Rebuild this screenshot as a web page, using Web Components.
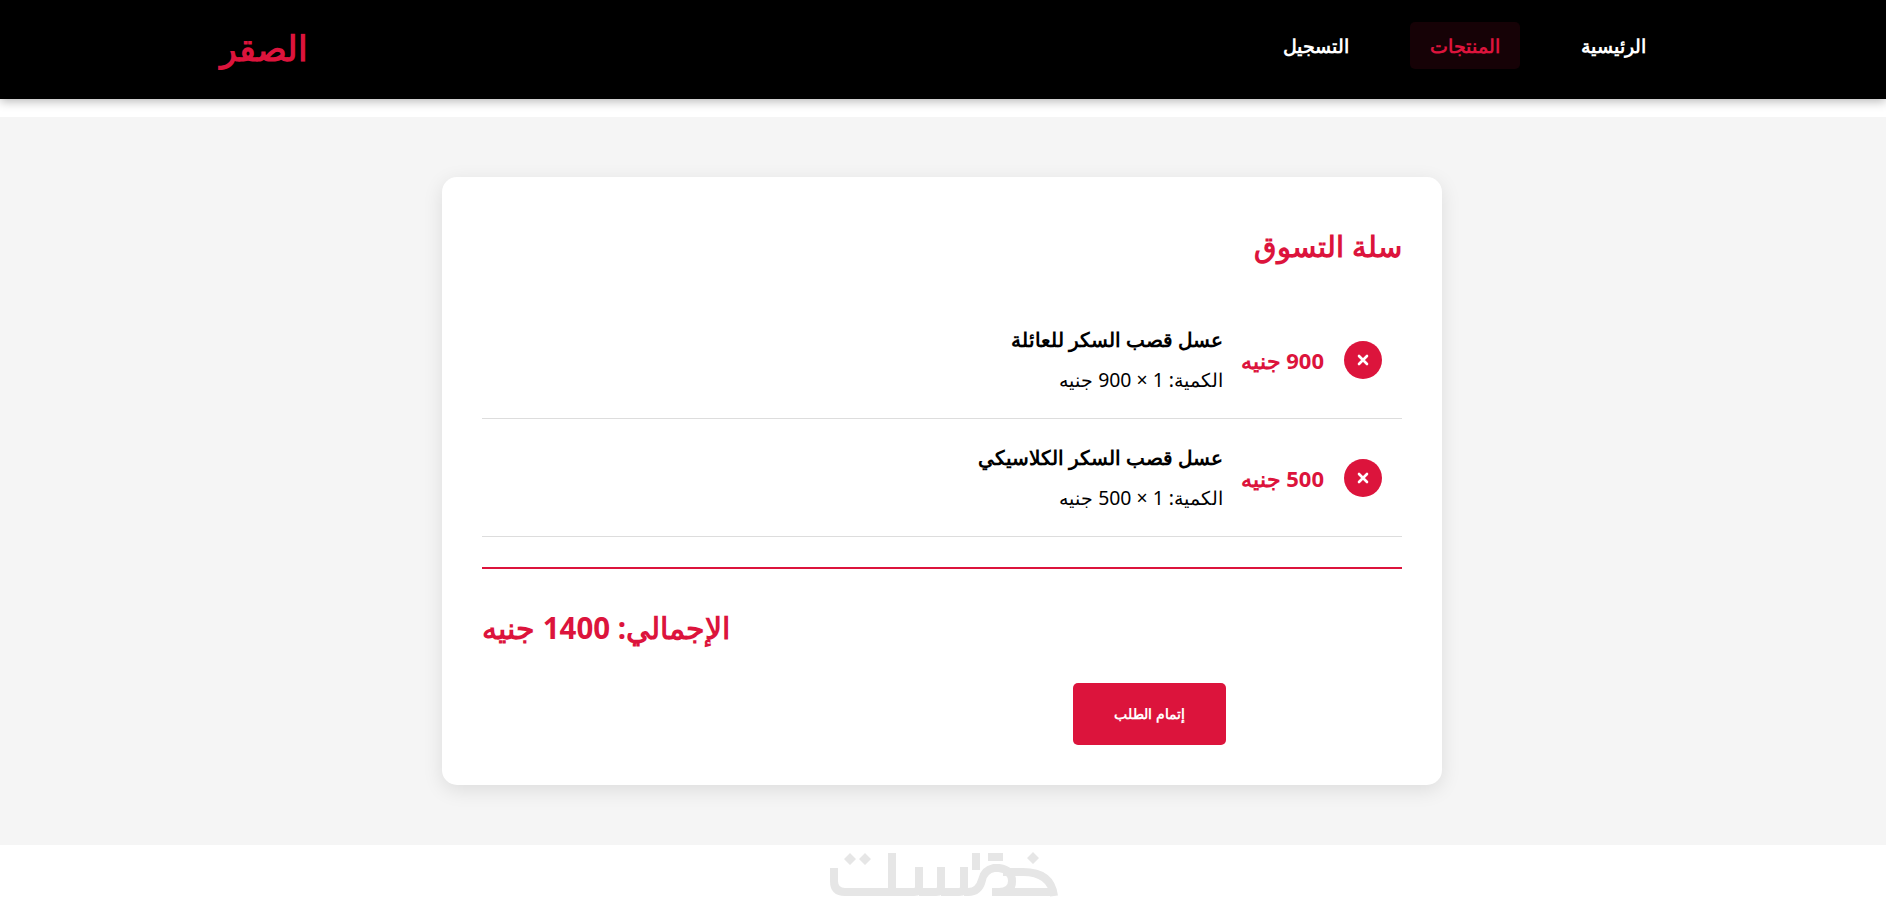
<!DOCTYPE html>
<html lang="ar" dir="rtl">
<head>
<meta charset="utf-8">
<title>سلة التسوق</title>
<style>
  html, body { margin: 0; background: #fff; }
  body { font-family: "Noto Sans", "Open Sans", sans-serif; color: #000; }
</style>
</head>
<body>
<site-header brand="الصقر">
  <nav-link>الرئيسية</nav-link>
  <nav-link active>المنتجات</nav-link>
  <nav-link>التسجيل</nav-link>
</site-header>
<cart-page>
  <cart-card heading="سلة التسوق" total="الإجمالي: 1400 جنيه" action="إتمام الطلب">
    <cart-item name="عسل قصب السكر للعائلة" qty="الكمية: 1 × 900 جنيه" price="900 جنيه"></cart-item>
    <cart-item name="عسل قصب السكر الكلاسيكي" qty="الكمية: 1 × 500 جنيه" price="500 جنيه"></cart-item>
  </cart-card>
</cart-page>
<site-footer></site-footer>

<script>
class SiteHeader extends HTMLElement {
  connectedCallback() {
    this.attachShadow({ mode: 'open' });
    this.shadowRoot.innerHTML = `
      <style>
        :host {
          display: flex;
          justify-content: space-between;
          align-items: center;
          box-sizing: border-box;
          height: 99px;
          padding: 0 220px 8px;
          margin-bottom: 18px;
          background: #000;
          box-shadow: 0 2px 10px rgba(0,0,0,.3);
        }
        nav { display: flex; gap: 41px; }
        .brand {
          color: #dc143c;
          font-size: 35px;
          font-weight: 700;
          line-height: 44px;
          margin-top: 5px;
        }
      </style>
      <nav><slot></slot></nav>
      <div class="brand">${this.getAttribute('brand')}</div>
    `;
  }
}
customElements.define('site-header', SiteHeader);

class NavLink extends HTMLElement {
  connectedCallback() {
    this.attachShadow({ mode: 'open' });
    this.shadowRoot.innerHTML = `
      <style>
        :host {
          display: block;
          padding: 12px 20px 10px;
          height: 25px;
          line-height: 25px;
          font-size: 19px;
          font-weight: 600;
          color: #fff;
          border-radius: 5px;
        }
        :host([active]) {
          color: #dc143c;
          background: rgba(220,20,60,.1);
        }
      </style>
      <slot></slot>
    `;
  }
}
customElements.define('nav-link', NavLink);

class CartPage extends HTMLElement {
  connectedCallback() {
    this.attachShadow({ mode: 'open' });
    this.shadowRoot.innerHTML = `
      <style>
        :host {
          display: flex;
          justify-content: center;
          padding: 60px 2px 60px 0;
          background: #f5f5f5;
        }
      </style>
      <slot></slot>
    `;
  }
}
customElements.define('cart-page', CartPage);

class CartCard extends HTMLElement {
  connectedCallback() {
    this.attachShadow({ mode: 'open' });
    this.shadowRoot.innerHTML = `
      <style>
        :host {
          display: block;
          box-sizing: border-box;
          width: 1000px;
          height: 608px;
          padding: 40px;
          background: #fff;
          border-radius: 15px;
          box-shadow: 0 5px 20px rgba(0,0,0,.1);
        }
        h2 {
          margin: 0 0 24px;
          height: 60px;
          color: #dc143c;
          font-size: 29.4px;
          font-weight: 600;
          line-height: 58px;
        }
        .total {
          margin-top: 30px;
          padding-top: 39px;
          border-top: 2px solid #dc143c;
          color: #dc143c;
          font-size: 29.5px;
          font-weight: 700;
          line-height: 40px;
          text-align: left;
        }
        button {
          display: block;
          width: 153px;
          height: 62px;
          margin: 35px 176px 0 0;
          padding: 0;
          border: 0;
          border-radius: 5px;
          background: #dc143c;
          color: #fff;
          font: 700 14px "Liberation Sans", Arial, sans-serif;
        }
      </style>
      <h2>${this.getAttribute('heading')}</h2>
      <slot></slot>
      <div class="total">${this.getAttribute('total')}</div>
      <button>${this.getAttribute('action')}</button>
    `;
  }
}
customElements.define('cart-card', CartCard);

class CartItem extends HTMLElement {
  connectedCallback() {
    this.attachShadow({ mode: 'open' });
    this.shadowRoot.innerHTML = `
      <style>
        :host {
          display: flex;
          align-items: center;
          gap: 20px;
          box-sizing: border-box;
          height: 118px;
          padding: 0 20px;
          border-bottom: 1px solid #ddd;
        }
        .remove {
          flex: none;
          display: flex;
          align-items: center;
          justify-content: center;
          width: 38px;
          height: 38px;
          border-radius: 50%;
          background: #dc143c;
        }
        .price {
          flex: none;
          width: 81px;
          color: #dc143c;
          font-size: 22px;
          font-weight: 700;
          white-space: nowrap;
        }
        .name { font-size: 19.8px; font-weight: 700; line-height: 24px; }
        .qty { font-size: 19.4px; line-height: 24px; margin-top: 16px; }
      </style>
      <div class="remove">
        <svg width="12" height="12" viewBox="0 0 12 12"><path d="M2 2l8 8M10 2l-8 8" stroke="#fff" stroke-width="2.6" stroke-linecap="round"/></svg>
      </div>
      <div class="price">${this.getAttribute('price')}</div>
      <div>
        <div class="name">${this.getAttribute('name')}</div>
        <div class="qty">${this.getAttribute('qty')}</div>
      </div>
    `;
  }
}
customElements.define('cart-item', CartItem);

class SiteFooter extends HTMLElement {
  connectedCallback() {
    this.attachShadow({ mode: 'open' });
    this.shadowRoot.innerHTML = `
      <style>
        :host {
          display: flex;
          justify-content: center;
          height: 71px;
          background: #fff;
        }
        svg { display: block; margin-top: 6px; }
      </style>
      <svg width="230" height="48" viewBox="828 851 230 48" fill="none" stroke="#e6e6e6" stroke-width="8">
        <path d="M834 868v13q0 11 11 11h47V853M892 892h22q5 0 5-5v-20M919 892h17q5 0 5-5v-20M941 892h18q5 0 5-5v-20"/>
        <path d="M964 892h4q11 0 14-12q2-10 12-12h5q13 2 13 13q0 11-13 11h-7"/>
        <path d="M988 857h15M976 853v17M1003 872h20q28 0 31 24M1000 892h53"/>
        <g fill="#e6e6e6" stroke="none">
          <path d="M850 853l6 6-6 6-6-6zM865 853l6 6-6 6-6-6zM1033 852l6 6-6 6-6-6z"/>
        </g>
      </svg>
    `;
  }
}
customElements.define('site-footer', SiteFooter);
</script>
</body>
</html>
